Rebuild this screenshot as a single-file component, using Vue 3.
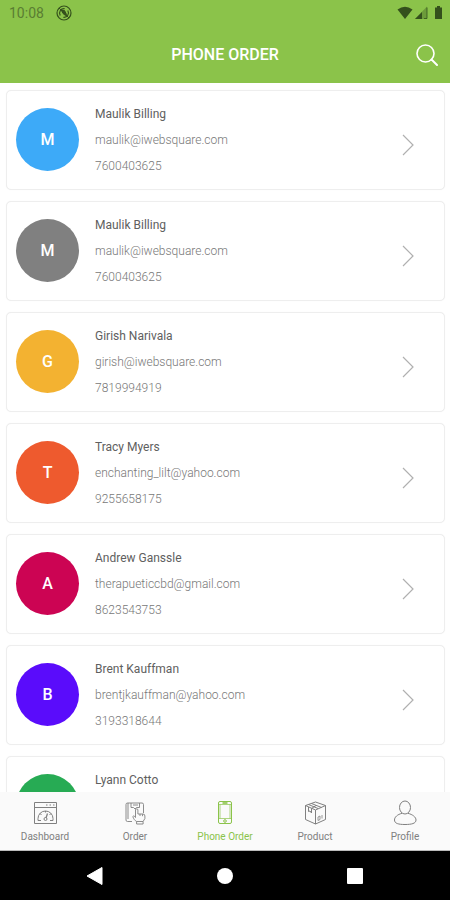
<script setup>
const contacts = [
  { name: 'Maulik Billing', email: 'maulik@iwebsquare.com', phone: '7600403625', color: '#3daaf8' },
  { name: 'Maulik Billing', email: 'maulik@iwebsquare.com', phone: '7600403625', color: '#808080' },
  { name: 'Girish Narivala', email: 'girish@iwebsquare.com', phone: '7819994919', color: '#f3b231' },
  { name: 'Tracy Myers', email: 'enchanting_lilt@yahoo.com', phone: '9255658175', color: '#ee5a2e' },
  { name: 'Andrew Ganssle', email: 'therapueticcbd@gmail.com', phone: '8623543753', color: '#cc0453' },
  { name: 'Brent Kauffman', email: 'brentjkauffman@yahoo.com', phone: '3193318644', color: '#5a0cfb' },
  { name: 'Lyann Cotto', email: '', phone: '', color: '#27ab54' },
]
const tabs = ['Dashboard', 'Order', 'Phone Order', 'Product', 'Profile']
</script>

<template>
  <div class="screen">
    <header class="top">
      <div class="status">
        <span class="clock">10:08</span>
        <svg class="app-badge" width="16" height="16" viewBox="0 0 16 16" aria-hidden="true">
          <circle cx="8" cy="8" r="7" fill="none" stroke="currentColor" stroke-width="1.2" />
          <path d="M4.200 10.500A4.500 4.500 0 0 1 8.600 3.700M11.800 5.500A4.500 4.500 0 0 1 7.400 12.300" fill="none" stroke="currentColor" stroke-width="1.2" />
          <path d="M5.500 5.500 8.500 5.500 10.500 9.500 9.500 10.500 7 8.500zM3 3l10 10" fill="currentColor" stroke="currentColor" stroke-width="1" />
        </svg>
        <svg class="signals" width="47" height="16" viewBox="0 0 47 16" aria-hidden="true">
          <path d="M0.500 4.500Q8 -1 15.500 4.500L8 14z" fill="currentColor" />
          <path d="M18 14 30 1.500V14z" fill="currentColor" opacity="0.35" />
          <path d="M18 14 25 7V14z" fill="currentColor" />
          <path d="M27 13.500h3V2.500" fill="none" stroke="currentColor" stroke-width="0.800" />
          <path d="M38 2.500h2V1h3v1.500h2V14h-7z" fill="currentColor" />
        </svg>
      </div>
      <div class="bar">
        <h1>PHONE ORDER</h1>
        <button class="search" type="button" aria-label="Search">
          <svg width="22" height="22" viewBox="0 0 22 22" fill="none" stroke="currentColor">
            <circle cx="9.500" cy="9.500" r="8.500" stroke-width="1.600" />
            <path d="M15.500 15.500 21 21" stroke-width="2" stroke-linecap="round" />
          </svg>
        </button>
      </div>
    </header>

    <main class="list">
      <button v-for="(c, i) in contacts" :key="i" class="card" type="button">
        <span class="avatar" :style="{ background: c.color }">{{ c.name[0] }}</span>
        <span class="info">
          <span class="name">{{ c.name }}</span>
          <span>{{ c.email }}</span>
          <span>{{ c.phone }}</span>
        </span>
        <svg class="chevron" width="12" height="22" viewBox="0 0 12 22" aria-hidden="true">
          <path d="M1 1 11 11 1 21" fill="none" stroke="currentColor" stroke-width="1.200" />
        </svg>
      </button>
    </main>

    <nav class="tabs">
      <a v-for="t in tabs" :key="t" href="#" class="tab" :class="{ active: t === 'Phone Order' }">
        <svg width="26" height="26" viewBox="0 0 26 26" fill="none" stroke="currentColor" stroke-linejoin="round" aria-hidden="true">
          <g v-if="t === 'Dashboard'">
            <path d="M2.500 2.500h22v21h-22zM2.500 7.500h22" />
            <path d="M14 5h1.500M17.500 5H19M21 5h1.500" />
            <path d="M6 20.500v-2a7.500 7.500 0 0 1 15 0v2h-3M6 20.500h3M8 13.500l1.500 1.500M13.500 11v1.500M19 13.500 17.500 15" />
            <path d="M15.500 13.500 14 18" stroke-width="1.300" />
            <circle cx="13.500" cy="19" r="1.500" />
          </g>
          <g v-else-if="t === 'Order'" stroke-width="0.900">
            <path d="M10 21.500H5.500A1.500 1.500 0 0 1 4 20V4.500A1.500 1.500 0 0 1 5.500 3H20a1.500 1.500 0 0 1 1.500 1.500V13M6 3v16M9 3v4.500h2.500L13 9l1.500-1.500h3V3M11 5h5M18.500 19" />
            <path d="M13.500 17.500V10a1.200 1.200 0 0 1 2.400 0V14h5a2 2 0 0 1 2 2v2.500l-1.800 3V24h-6.500v-2.500c-1.800-1-3-2.500-3.800-5 .7-1 1.800-.5 2.700 1M14.600 21.500h6.500M18 14v2M20.500 14.200v2" />
          </g>
          <g v-else-if="t === 'Phone Order'">
            <rect x="6.500" y="1.500" width="13" height="22" rx="1.500" />
            <path d="M6.500 4.500h13M6.500 18.500h13M8 4.500v14M18 4.500v14" stroke-width="0.700" />
            <path d="M10.500 3h5" stroke-width="1.600" />
            <circle cx="13" cy="21" r="1.300" />
          </g>
          <g v-else-if="t === 'Product'">
            <path d="M13.500 2 23.500 5.500v14l-10 4.500-10-4.500v-14zM3.500 5.500l10 4.500 10-4.500M13.500 10v14" />
            <path d="M6.500 4.500 16 8.500M9.500 3.500l10 4M6.500 7v4.500l1.500-.5 1.500 2V8.500l4.500-3" />
            <path d="M16 20.500v-3.500l2-1v3.500zM20 18.500V15" stroke-width="0.800" />
          </g>
          <g v-else>
            <ellipse cx="13" cy="7.500" rx="5.500" ry="6.500" />
            <path d="M10 13.300C5.500 14.500 2.500 17 2.500 20c0 3.500 4 4.500 10.500 4.500s11-1 11-4.500c0-3-3.500-5.500-8-6.700" />
          </g>
        </svg>
        <span>{{ t }}</span>
      </a>
    </nav>

    <footer class="system">
      <button type="button" aria-label="Back">
        <svg width="18" height="20" viewBox="0 0 18 20"><path d="M1 10 16 1.500V18.500z" fill="#fff" stroke="#fff" stroke-linejoin="round" /></svg>
      </button>
      <button type="button" aria-label="Home">
        <svg width="18" height="18" viewBox="0 0 18 18"><circle cx="9" cy="9" r="8" fill="#fff" /></svg>
      </button>
      <button type="button" aria-label="Recent apps">
        <svg width="18" height="18" viewBox="0 0 18 18"><rect x="1" y="1" width="16" height="16" rx="1" fill="#fff" /></svg>
      </button>
    </footer>
  </div>
</template>

<style>
body { margin: 0; background: #fff; }
</style>

<style scoped>
.screen {
  display: flex;
  flex-direction: column;
  height: 100vh;
  overflow: hidden;
  font-family: Roboto, "Liberation Sans", sans-serif;
  background: #fff;
}
button {
  border: 0;
  padding: 0;
  margin: 0;
  background: none;
  font: inherit;
  color: inherit;
  cursor: pointer;
}
svg { display: block; }
.top { flex: none; background: #8bc34a; }
.status {
  display: flex;
  align-items: center;
  height: 26px;
  padding: 0 6px 0 9px;
  color: #34501c;
}
.clock { font-size: 14px; color: #5a7d32; }
.app-badge { margin-left: 12px; }
.signals { margin-left: auto; }
.bar {
  display: grid;
  grid-template-columns: 1fr auto 1fr;
  align-items: center;
  height: 57px;
  padding: 0 12px;
  color: #fff;
}
h1 {
  grid-column: 2;
  margin: 0;
  font-size: 16px;
  line-height: 20px;
  font-weight: 500;
}
.search { justify-self: end; }
.list {
  flex: 1;
  min-height: 0;
  overflow: hidden;
  display: flex;
  flex-direction: column;
  gap: 11px;
  padding: 7px 5px 0 6px;
}
.card {
  flex: none;
  display: flex;
  align-items: center;
  gap: 16px;
  padding: 10px 30px 10px 9px;
  border: 1px solid #eee;
  border-radius: 5px;
  background: #fff;
  text-align: left;
  box-shadow: 0 0 1px #eee;
}
.avatar {
  flex: none;
  display: grid;
  place-items: center;
  width: 63px;
  height: 63px;
  margin-bottom: 2px;
  border-radius: 50%;
  color: #fff;
  font-size: 16px;
  font-weight: 500;
}
.info {
  flex: 1;
  display: grid;
  grid-template-rows: repeat(3, 26px);
  line-height: 26px;
  font-size: 12px;
  font-weight: 300;
  color: #777;
}
.name { font-weight: 400; color: #606060; }
.chevron { color: #b0b0b0; margin-top: 10px; }
.tabs {
  flex: none;
  display: grid;
  grid-template-columns: repeat(5, 1fr);
  height: 58px;
  border-bottom: 1px solid #bbb;
  background: #fafafa;
}
.tab {
  display: flex;
  flex-direction: column;
  align-items: center;
  gap: 5px;
  padding-top: 8px;
  font-size: 10px;
  line-height: 12px;
  color: #808080;
  text-decoration: none;
}
.active { color: #8bc34a; }
.system {
  flex: none;
  display: flex;
  justify-content: center;
  gap: 112px;
  height: 49px;
  background: #000;
}
</style>
